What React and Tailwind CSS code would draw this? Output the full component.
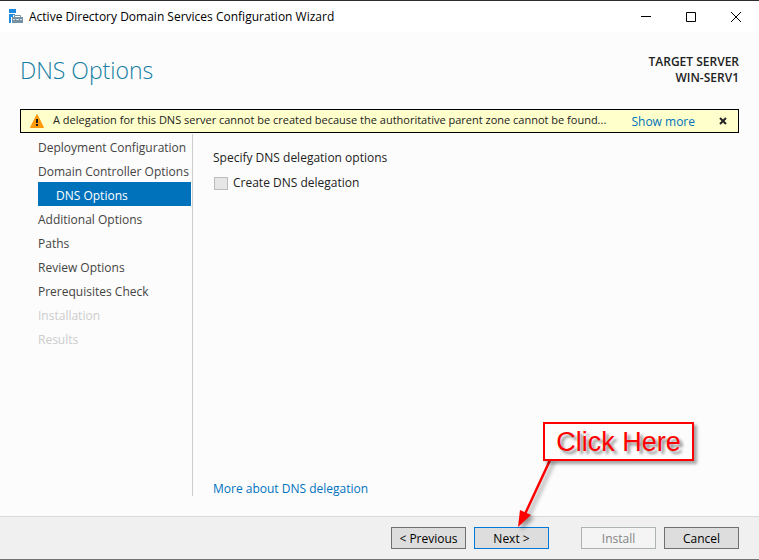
import React from "react";

const steps = [
  { label: "Deployment Configuration" },
  { label: "Domain Controller Options" },
  { label: "DNS Options", current: true },
  { label: "Additional Options" },
  { label: "Paths" },
  { label: "Review Options" },
  { label: "Prerequisites Check" },
  { label: "Installation", disabled: true },
  { label: "Results", disabled: true },
];

function stepClass(step) {
  if (step.current) return "bg-[#0072bc] pl-[18px] text-white";
  if (step.disabled) return "text-[#cccccc]";
  return "text-[#444444]";
}

function WizardIcon() {
  return (
    <svg width="15" height="15" viewBox="0 0 15 15" aria-hidden="true">
      <path d="M0 0h7v4H0z" fill="#1e8be0" />
      <path d="M0 5h6v1H4v2H2v6H0z" fill="#1e8be0" />
      <path d="M5.500 8V6.500h6V8" fill="none" stroke="#7791a5" />
      <path d="M3 8h11v6H3z" fill="#7791a5" />
      <path d="M4 10.500h2M11 10.500h2M7 10.500h3" stroke="#d5dee5" />
    </svg>
  );
}

function TitleBar() {
  return (
    <header className="flex h-8 items-center border-t border-[#302c2e] bg-white pl-[9px] text-black">
      <WizardIcon />
      <h1 className="ml-[5px] flex-1 text-[12px]">Active Directory Domain Services Configuration Wizard</h1>
      <button type="button" aria-label="Minimize" className="flex h-full w-[46px] items-center justify-center">
        <svg width="10" height="10" viewBox="0 0 10 10"><path d="M0 4.500h10" stroke="#000" /></svg>
      </button>
      <button type="button" aria-label="Maximize" className="flex h-full w-11 items-center justify-center">
        <svg width="10" height="10" viewBox="0 0 10 10"><path d="M.5.5h9v9h-9z" fill="none" stroke="#000" /></svg>
      </button>
      <button type="button" aria-label="Close" className="flex h-full w-[46px] items-center justify-center">
        <svg width="10" height="10" viewBox="0 0 10 10"><path d="M0 0l10 10M10 0L0 10" stroke="#000" /></svg>
      </button>
    </header>
  );
}

function Banner() {
  return (
    <div role="alert" className="mx-5 flex h-6 items-center border border-black bg-[#ffffcc] pl-[9px] pr-[11px]">
      <svg width="14" height="14" viewBox="0 0 14 14" className="shrink-0" aria-hidden="true">
        <path d="M7 .5L13.500 13.500H.5z" fill="#ff9a0c" stroke="#ff9a0c" strokeLinejoin="round" />
        <path d="M6 5h2v4H6zM6 10h2v2H6z" fill="#1c1c1c" />
      </svg>
      <p className="ml-[9px] whitespace-nowrap pb-[2px] text-[11px] text-[#222222]">
        A delegation for this DNS server cannot be created because the authoritative parent zone cannot be found...
      </p>
      <a href="#more" className="ml-auto mr-6 shrink-0 pt-[2px] text-[#0072bc]">Show more</a>
      <button type="button" aria-label="Dismiss">
        <svg width="8" height="8" viewBox="0 0 8 8"><path d="M1 1l6 6M7 1L1 7" stroke="#222" strokeWidth="2" /></svg>
      </button>
    </div>
  );
}

function Callout() {
  return (
    <div className="pointer-events-none absolute -top-[105px] left-[44px] h-[110px] w-[184px]">
      <svg width="70" height="80" viewBox="0 0 70 80" className="absolute left-0 top-[36px] overflow-visible drop-shadow-[3px_3px_2px_rgba(0,0,0,0.4)]" aria-hidden="true">
        <path d="M33 0L7 56" stroke="#ff0000" strokeWidth="2.500" />
        <path d="M0 69L2 52L13 57z" fill="#ff0000" />
      </svg>
      <div className="absolute left-[25px] top-0 flex h-[39px] w-[151px] items-center justify-center border-2 border-[#ff0000] bg-[#fcfcfc] font-['Liberation_Sans',Arial,sans-serif] text-[27px] text-[#ff0000] shadow-[3px_3px_3px_rgba(0,0,0,0.35)] [text-shadow:3px_3px_3px_rgba(0,0,0,0.45)]">
        Click Here
      </div>
    </div>
  );
}

const buttonClass = "h-[22px] w-[75px] border pt-px text-[12px]";

export default function App() {
  return (
    <div className="flex min-h-screen flex-col border-b border-[#737373] bg-[#fcfcfc] font-['Open_Sans','Noto_Sans',sans-serif] text-[12px] leading-4">
      <TitleBar />
      <div className="flex h-[77px] items-start justify-between px-5 pt-[22px]">
        <h2 className="text-[23px] font-light leading-8 text-[#137ca2]">DNS Options</h2>
        <p className="text-right text-[12px] font-semibold text-[#222222]">TARGET SERVER<br />WIN-SERV1</p>
      </div>
      <Banner />
      <div className="flex flex-1 pb-5">
        <nav className="ml-[38px] mt-px w-[155px] border-r border-[#cccccc] pr-px">
          <ol>
            {steps.map((step) => (
              <li
                key={step.label}
                aria-current={step.current ? "step" : undefined}
                className={"h-6 whitespace-nowrap pt-[2px] text-[12px] leading-6 " + stepClass(step)}
              >
                {step.label}
              </li>
            ))}
          </ol>
        </nav>
        <main className="flex flex-1 flex-col items-start px-5 pt-[17px] text-[#222222]">
          <p>Specify DNS delegation options</p>
          <label className="mt-[9px] flex items-center gap-[5px]">
            <input type="checkbox" disabled className="ml-px h-[13px] w-[14px] appearance-none border border-[#bcbcbc] bg-[#e6e6e6]" />
            Create DNS delegation
          </label>
          <a href="#dns-delegation" className="-mb-px mt-auto text-[#0072bc]">More about DNS delegation</a>
        </main>
      </div>
      <footer className="flex h-[43px] items-center justify-end gap-2 border-t border-[#dadada] bg-[#f0f0f0] px-5">
        <button type="button" className={buttonClass + " border-[#707070] bg-[#dddddd]"}>&lt; Previous</button>
        <div className="relative mr-6 flex">
          <button type="button" className={buttonClass + " border-[#0078d7] bg-[#dddddd]"}>Next &gt;</button>
          <Callout />
        </div>
        <button type="button" disabled className={buttonClass + " border-[#adb2b5] bg-[#f4f4f4] text-[#838383]"}>Install</button>
        <button type="button" className={buttonClass + " border-[#707070] bg-[#dddddd]"}>Cancel</button>
      </footer>
    </div>
  );
}
